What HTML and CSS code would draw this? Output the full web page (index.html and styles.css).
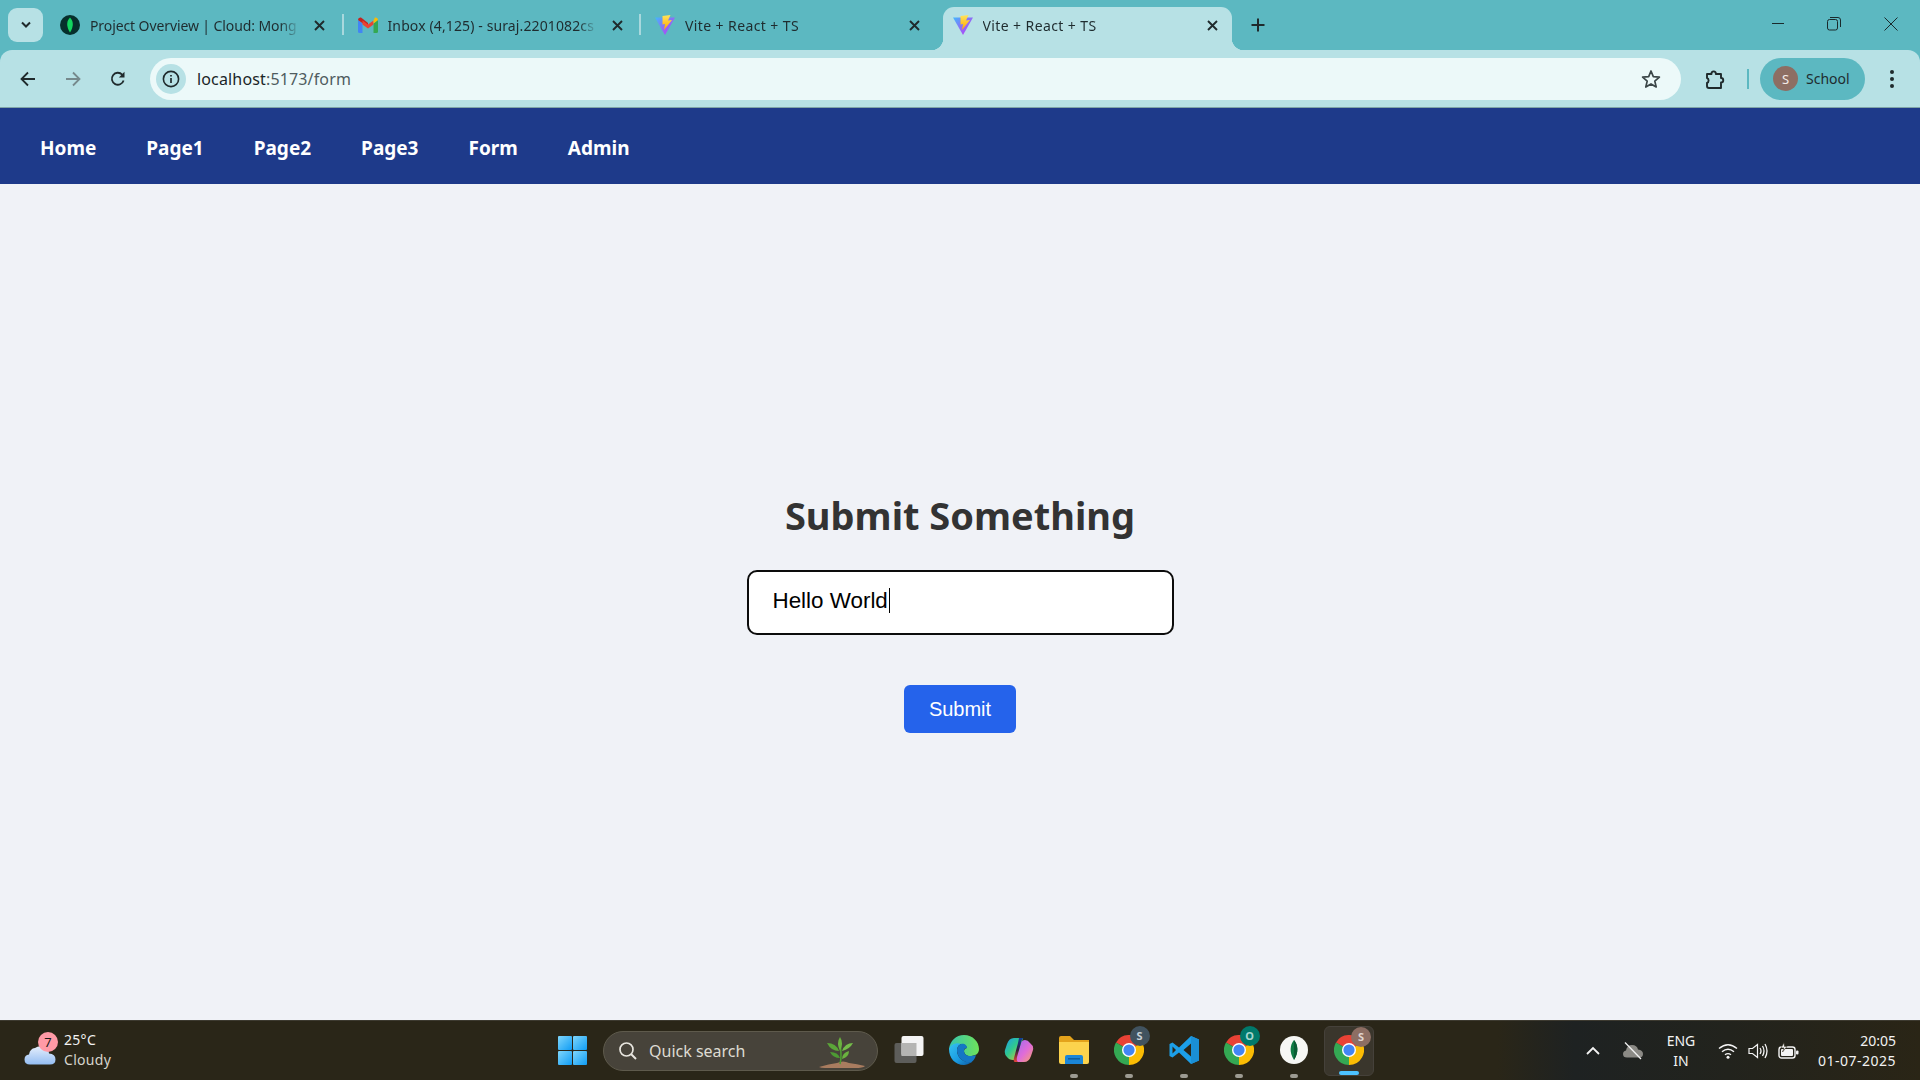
FILE: index.html
```html
<!DOCTYPE html>
<html lang="en">
<head>
<meta charset="utf-8">
<title>Vite + React + TS</title>
<link rel="stylesheet" href="styles.css">
</head>
<body>
<svg class="defs" width="0" height="0" aria-hidden="true">
  <defs>
    <linearGradient id="viteA" x1="0" y1="0" x2="1" y2="1"><stop offset="0" stop-color="#41b8ff"/><stop offset=".5" stop-color="#8f6cf5"/><stop offset="1" stop-color="#bd34fe"/></linearGradient>
    <linearGradient id="viteB" x1="0" y1="0" x2="0" y2="1"><stop offset="0" stop-color="#ffe45c"/><stop offset="1" stop-color="#ffa800"/></linearGradient>
    <linearGradient id="edgeA" x1="0" y1="0" x2="1" y2="1"><stop offset="0" stop-color="#35c1f1"/><stop offset=".55" stop-color="#1b9de2"/><stop offset="1" stop-color="#0c59a4"/></linearGradient>
    <linearGradient id="edgeB" x1="0" y1="0" x2="1" y2="0"><stop offset="0" stop-color="#36c4b0"/><stop offset="1" stop-color="#6fe35a"/></linearGradient>
    <linearGradient id="copA" x1="0" y1="0" x2="1" y2="1"><stop offset="0" stop-color="#1c9cf0"/><stop offset=".45" stop-color="#2fc98e"/><stop offset="1" stop-color="#f8c62a"/></linearGradient>
    <linearGradient id="copB" x1="0" y1="0" x2="1" y2="1"><stop offset="0" stop-color="#9a6cf0"/><stop offset=".55" stop-color="#e06cd8"/><stop offset="1" stop-color="#f8a26a"/></linearGradient>
    <linearGradient id="copC" x1="0" y1="0" x2="0" y2="1"><stop offset="0" stop-color="#123f9c"/><stop offset=".5" stop-color="#2a1f3a"/><stop offset="1" stop-color="#e8453c"/></linearGradient>
    <linearGradient id="winA" x1="0" y1="0" x2="1" y2="1"><stop offset="0" stop-color="#7fd6fb"/><stop offset="1" stop-color="#0f9cf5"/></linearGradient>
    <linearGradient id="cloudA" x1="0" y1="0" x2="0" y2="1"><stop offset="0" stop-color="#e6effc"/><stop offset="1" stop-color="#94bdf2"/></linearGradient>
    <symbol id="vite" viewBox="0 0 20 20">
      <path d="M0 2.5 L20 2.5 L10 20 Z" fill="url(#viteA)"/>
      <path d="M7.5 1 L15.5 0 L13 5.5 L17 5 L9 15 L10 9 L7.5 9.5 Z" fill="url(#viteB)"/>
    </symbol>
    <symbol id="chrome" viewBox="0 0 24 24">
      <path d="M12 12 L1.6 6 A12 12 0 0 1 22.4 6 Z" fill="#e94235"/>
      <path d="M12 12 L1.6 6 A12 12 0 0 0 12 24 Z" fill="#34a853"/>
      <path d="M12 12 L22.4 6 A12 12 0 0 1 12 24 Z" fill="#fbbc04"/>
      <circle cx="12" cy="12" r="5.6" fill="#fff"/>
      <circle cx="12" cy="12" r="4.5" fill="#4285f4"/>
    </symbol>
    <symbol id="close" viewBox="0 0 11 11">
      <path d="M1 1 L10 10 M10 1 L1 10" stroke="#1f2a2c" stroke-width="1.9"/>
    </symbol>
  </defs>
</svg>

<header class="browser">
  <div class="tabstrip">
    <button class="tab-search" aria-label="Search tabs">
      <svg width="12" height="8" viewBox="0 0 12 8"><path d="M2 1.5 L6 5.5 L10 1.5" fill="none" stroke="#1f2a2c" stroke-width="2"/></svg>
    </button>
    <div class="tab sep">
      <svg class="favicon" viewBox="0 0 20 20"><circle cx="10" cy="10" r="10" fill="#062f2c"/><path d="M10 2.5 C13.5 6 14 11 10 17.5 C6 11 6.5 6 10 2.5 Z" fill="#13d45f"/></svg>
      <span class="tab-title">Project Overview | Cloud: Mong</span>
      <svg class="tab-close"><use href="#close"/></svg>
    </div>
    <div class="tab sep">
      <svg class="favicon" viewBox="0 0 20 16"><path d="M0 3 L0 14.5 Q0 16 1.5 16 L4.5 16 L4.5 6.5 Z" fill="#4285f4"/><path d="M15.5 6.5 L15.5 16 L18.5 16 Q20 16 20 14.5 L20 3 Z" fill="#34a853"/><path d="M0 3 Q0 0 3 0.5 L10 6 L10 10 L0 3 Z" fill="#c5221f"/><path d="M4.5 3.5 L10 7.5 L15.5 3.5 L15.5 7.5 L10 11.5 L4.5 7.5 Z" fill="#ea4335"/><path d="M15.5 3.5 L17 0.5 Q20 0 20 3 L15.5 6.5 Z" fill="#fbbc04"/></svg>
      <span class="tab-title wide">Inbox (4,125) - suraj.2201082cs</span>
      <svg class="tab-close"><use href="#close"/></svg>
    </div>
    <div class="tab">
      <svg class="favicon"><use href="#vite"/></svg>
      <span class="tab-title plain">Vite + React + TS</span>
      <svg class="tab-close"><use href="#close"/></svg>
    </div>
    <div class="tab active">
      <svg class="favicon"><use href="#vite"/></svg>
      <span class="tab-title plain">Vite + React + TS</span>
      <svg class="tab-close"><use href="#close"/></svg>
    </div>
    <button class="new-tab" aria-label="New tab">
      <svg width="14" height="14" viewBox="0 0 14 14"><path d="M7 0.5 V13.5 M0.5 7 H13.5" stroke="#1f2a2c" stroke-width="2"/></svg>
    </button>
    <div class="window-controls">
      <span class="win-btn"><svg width="14" height="14" viewBox="0 0 14 14"><path d="M1 6.5 H13" stroke="#1a2a2c" stroke-width="1"/></svg></span>
      <span class="win-btn"><svg width="14" height="14" viewBox="0 0 14 14"><rect x="0.5" y="2.5" width="10" height="10.5" rx="2" fill="none" stroke="#1a2a2c"/><path d="M3 0.5 H11 Q13.5 0.5 13.5 3 V10" fill="none" stroke="#1a2a2c"/></svg></span>
      <span class="win-btn"><svg width="14" height="14" viewBox="0 0 14 14"><path d="M0.5 0.5 L13.5 13.5 M13.5 0.5 L0.5 13.5" stroke="#1a2a2c" stroke-width="1"/></svg></span>
    </div>
  </div>
  <div class="toolbar">
    <button class="tool-btn" aria-label="Back"><svg width="16" height="16" viewBox="0 0 16 16"><path d="M15 8 H2 M8 1.5 L1.5 8 L8 14.5" fill="none" stroke="#1f2a2c" stroke-width="1.8"/></svg></button>
    <button class="tool-btn" aria-label="Forward"><svg width="16" height="16" viewBox="0 0 16 16"><path d="M1 8 H14 M8 1.5 L14.5 8 L8 14.5" fill="none" stroke="#76898c" stroke-width="1.8"/></svg></button>
    <button class="tool-btn" aria-label="Reload"><svg width="16" height="16" viewBox="0 0 16 16"><path d="M13.6 9.5 A6 6 0 1 1 12.2 3.6" fill="none" stroke="#1f2a2c" stroke-width="1.8"/><path d="M14.5 0.8 V6.5 H8.8 Z" fill="#1f2a2c"/></svg></button>
    <div class="omnibox">
      <span class="site-info"><svg width="18" height="18" viewBox="0 0 18 18"><circle cx="9" cy="9" r="7.6" fill="none" stroke="#1f2a2c" stroke-width="1.6"/><path d="M9 8 V13 M9 5 V6.6" stroke="#1f2a2c" stroke-width="1.7"/></svg></span>
      <span class="url"><span class="url-host">localhost</span>:5173/form</span>
      <svg class="star" width="20" height="20" viewBox="0 0 20 20"><path d="M10 2 L12.3 7.6 L18.4 8.1 L13.8 12.1 L15.2 18 L10 14.9 L4.8 18 L6.2 12.1 L1.6 8.1 L7.7 7.6 Z" fill="none" stroke="#3b4648" stroke-width="1.7" stroke-linejoin="round"/></svg>
    </div>
    <button class="tool-btn ext" aria-label="Extensions"><svg width="22" height="22" viewBox="0 0 22 22"><path d="M3 6 H7.5 A2.2 2.2 0 1 1 11.8 6 H17 V10 A2.2 2.2 0 1 1 17 14.5 V20 H5 Q3 20 3 18 V14.8 A2.6 2.6 0 0 0 3 10 Z" fill="none" stroke="#1f2a2c" stroke-width="1.9" stroke-linejoin="round"/></svg></button>
    <span class="tool-sep"></span>
    <div class="profile"><span class="avatar">S</span><span class="profile-name">School</span></div>
    <button class="tool-btn menu" aria-label="Menu"><svg width="6" height="20" viewBox="0 0 6 20"><circle cx="3" cy="3" r="2" fill="#1f2a2c"/><circle cx="3" cy="10" r="2" fill="#1f2a2c"/><circle cx="3" cy="17" r="2" fill="#1f2a2c"/></svg></button>
  </div>
</header>

<nav class="navbar">
  <a class="nav-link">Home</a>
  <a class="nav-link">Page1</a>
  <a class="nav-link">Page2</a>
  <a class="nav-link">Page3</a>
  <a class="nav-link">Form</a>
  <a class="nav-link">Admin</a>
</nav>

<main class="page">
  <h1 class="title">Submit Something</h1>
  <div class="field"><span class="field-text">Hello World</span><span class="caret"></span></div>
  <button class="submit">Submit</button>
</main>

<footer class="taskbar">
  <div class="weather">
    <div class="weather-icon">
      <svg width="32" height="21" viewBox="0 0 32 21"><path d="M6 20.5 Q0.5 20.5 0.5 15.5 Q0.5 11 5 10.5 Q6 4.5 11 4 Q15 1 20 3 Q25 5 25 9.5 Q31.5 10 31.5 15.5 Q31.5 20.5 26 20.5 Z" fill="url(#cloudA)"/></svg>
      <span class="weather-badge">7</span>
    </div>
    <div class="weather-text"><span class="temp">25°C</span><span class="cond">Cloudy</span></div>
  </div>
  <svg class="start" width="29" height="29" viewBox="0 0 29 29"><rect width="14" height="14" rx="1" fill="url(#winA)"/><rect x="15" width="14" height="14" rx="1" fill="url(#winA)"/><rect y="15" width="14" height="14" rx="1" fill="url(#winA)"/><rect x="15" y="15" width="14" height="14" rx="1" fill="url(#winA)"/></svg>
  <div class="search">
    <svg width="20" height="20" viewBox="0 0 20 20"><circle cx="8.5" cy="8.5" r="6.5" fill="none" stroke="#e8e6df" stroke-width="1.7"/><path d="M13 13 L18 18" stroke="#e8e6df" stroke-width="1.9"/></svg>
    <span class="search-text">Quick search</span>
    <svg class="plant" width="46" height="32" viewBox="0 0 46 32"><path d="M0 30 Q10 27 18 26 Q24 23 30 26 Q38 27 46 29 Q44 31 36 31 H6 Q2 31 0 30 Z" fill="#a97c5f"/><path d="M21 27 Q23 20 21 6" fill="none" stroke="#4d9a33" stroke-width="1.6"/><path d="M21 0 Q25 6 21 14 Q17 6 21 0 Z" fill="#6ab23f"/><path d="M20 14 Q12 14 8 6 Q17 6 20 14 Z" fill="#5ba638"/><path d="M23 14 Q31 12 34 6 Q26 6 23 14 Z" fill="#74bd4a"/><path d="M21 21 Q14 21 11 15 Q19 15 21 21 Z" fill="#4d9a33"/><path d="M23 22 Q30 20 30 14 Q23 16 23 22 Z" fill="#6ab23f"/></svg>
  </div>
  <div class="apps">
    <div class="app">
      <svg width="30" height="30" viewBox="0 0 30 30"><rect x="0.5" y="8" width="22" height="20" rx="2" fill="#5d5d5a"/><rect x="7.5" y="1" width="22" height="20" rx="2" fill="#f4f4f4"/><rect x="7.5" y="8" width="15" height="13" fill="#b5b5b3"/></svg>
    </div>
    <div class="app">
      <svg width="30" height="30" viewBox="0 0 30 30"><path d="M15 0 C24 0 30 7 30 14 C30 19 26 21 21 21 C18 21 15 19 15 16 C15 14 17 13 18 13 C17 9 13 8 9 10 C4 12 1 15 0 14 C1 6 7 0 15 0 Z" fill="url(#edgeB)"/><path d="M0 14 C2 9 8 7 12 9 C8 11 7 15 9 20 C11 25 17 28 23 27 C20 29 17 30 15 30 C6 30 0 23 0 14 Z" fill="url(#edgeA)"/><path d="M12 9 C16 8 18 11 18 13 C16 13 15 14 15 16 C15 19 18 21 21 21 C24 21 27 20 27 20 C26 24 24 26 22 27.5 C17 28 11 25 9 20 C7 15 8 11 12 9 Z" fill="#1477c4"/></svg>
    </div>
    <div class="app">
      <svg width="30" height="30" viewBox="0 0 30 30"><path d="M10 3 H19 L13 25 H9 Q5 25 3 22 Q0 19 1 15 L3 9 Q5 3 10 3 Z" fill="url(#copA)"/><path d="M21 5 Q24 5 26 8 Q30 11 29 15 L27 21 Q25 27 20 27 H11 L17 8 Q18 5 21 5 Z" fill="url(#copB)"/><path d="M15 3 H20 Q18 3 17 8 L13 22 Q12 27 15 27 H11 Q9 27 10 23 L14 8 Q15 3 15 3 Z" fill="url(#copC)"/></svg>
    </div>
    <div class="app">
      <svg width="30" height="28" viewBox="0 0 30 28"><path d="M0 2 Q0 0 2 0 H11 L15 4 H30 V10 H0 Z" fill="#e4a31b"/><path d="M0 6 H30 V26 Q30 28 28 28 H2 Q0 28 0 26 Z" fill="#fcd34d"/><path d="M6 21 Q6 19 8 19 H22 Q24 19 24 21 V28 H6 Z" fill="#1b86d8"/><rect x="9" y="22" width="12" height="1.6" fill="#0f5f9f"/></svg>
      <span class="dot"></span>
    </div>
    <div class="app">
      <svg width="30" height="30"><use href="#chrome"/></svg>
      <span class="app-badge badge-slate">S</span>
      <span class="dot"></span>
    </div>
    <div class="app">
      <svg width="30" height="30" viewBox="0 0 30 30"><path d="M22 1 L30 4.5 V25.5 L22 29 L10 17.5 L3.5 22.5 L0.5 21 V9 L3.5 7.5 L10 12.5 Z M22 8.5 L14.5 15 L22 21.5 Z M3.5 11.5 V18.5 L7 15 Z" fill="#1c9fe8" fill-rule="evenodd"/><path d="M22 1 L30 4.5 V25.5 L22 29 Z M22 8.5 V21.5 L22 21.5 Z" fill="#1a8fd6"/></svg>
      <span class="dot"></span>
    </div>
    <div class="app">
      <svg width="30" height="30"><use href="#chrome"/></svg>
      <span class="app-badge badge-teal">O</span>
      <span class="dot"></span>
    </div>
    <div class="app">
      <svg width="28" height="28" viewBox="0 0 28 28"><circle cx="14" cy="14" r="14" fill="#f6f7f4"/><path d="M14 4 C18 9 19 16 14 24 C9 16 10 9 14 4 Z" fill="#0e7a43"/><path d="M14 4 C18 9 19 16 14 24 Z" fill="#0a5c33"/></svg>
      <span class="dot"></span>
    </div>
    <div class="app current">
      <svg width="30" height="30"><use href="#chrome"/></svg>
      <span class="app-badge badge-brown">S</span>
      <span class="dot active-dot"></span>
    </div>
  </div>
  <div class="tray">
    <span class="tray-item w40"><svg width="14" height="9" viewBox="0 0 14 9"><path d="M1 8 L7 2 L13 8" fill="none" stroke="#f4f4f4" stroke-width="1.8"/></svg></span>
    <span class="tray-item w40"><svg width="22" height="18" viewBox="0 0 22 18"><path d="M5 15.5 Q1 15.5 1 12 Q1 9 4 8.5 Q5 3 10 3 Q15 3 16 7.5 Q21 8 21 12 Q21 15.5 17 15.5 Z" fill="#8b8a85"/><path d="M3 0.5 L19 17" stroke="#f2f2f2" stroke-width="1.3"/></svg></span>
    <div class="lang"><span>ENG</span><span>IN</span></div>
    <span class="tray-item w30"><svg width="20" height="16" viewBox="0 0 20 16"><path d="M1 5.5 Q10 -2 19 5.5 M4 8.8 Q10 3.5 16 8.8 M7 11.8 Q10 9.5 13 11.8" fill="none" stroke="#f4f4f4" stroke-width="1.4"/><circle cx="10" cy="14.2" r="1.5" fill="#f4f4f4"/></svg></span>
    <span class="tray-item w30"><svg width="20" height="18" viewBox="0 0 20 18"><path d="M1 6.5 H4.5 L9.5 2.5 V15.5 L4.5 11.5 H1 Z" fill="none" stroke="#f4f4f4" stroke-width="1.2"/><path d="M12 6 Q14 9 12 12 M14.5 4 Q17.5 9 14.5 14 M17 2 Q21 9 17 16" fill="none" stroke="#f4f4f4" stroke-width="1.3"/></svg></span>
    <span class="tray-item w30"><svg width="21" height="18" viewBox="0 0 21 18"><rect x="1" y="5" width="16" height="11" rx="2.5" fill="none" stroke="#f4f4f4" stroke-width="1.4"/><rect x="3" y="7" width="12" height="7" rx="1" fill="#f4f4f4"/><rect x="18" y="8.5" width="2.5" height="4" rx="1" fill="#f4f4f4"/><path d="M6 0.5 L3 6 H6 L4.5 10 L9 4.5 H6.5 Z" fill="#f4f4f4" stroke="#2a2516" stroke-width=".6"/></svg></span>
    <div class="clock"><span>20:05</span><span class="date">01-07-2025</span></div>
  </div>
</footer>
</body>
</html>
```

FILE: styles.css
```css
* { box-sizing: border-box; }
html, body { margin: 0; height: 100%; }
body {
  width: 1920px;
  height: 1080px;
  overflow: hidden;
  display: flex;
  flex-direction: column;
  font-family: "Noto Sans", "Open Sans", sans-serif;
  background: #f0f2f7;
}
button { border: 0; background: none; padding: 0; font: inherit; }
.defs { position: absolute; }

/* Browser chrome */
.browser { flex: none; height: 108px; background: #5cb8c1; }
.tabstrip { display: flex; align-items: flex-end; height: 50px; padding-left: 8px; }
.tab-search {
  align-self: flex-start;
  margin-top: 8px;
  margin-right: 3px;
  width: 35px;
  height: 34px;
  border-radius: 9px;
  background: #b7e1e5;
  display: flex;
  align-items: center;
  justify-content: center;
}
.tab {
  position: relative;
  width: 297.5px;
  height: 43px;
  display: flex;
  align-items: center;
  padding: 0 16px 7px 14px;
  color: #1f2c2f;
  font-size: 14px;
}
.tab.sep::after {
  content: "";
  position: absolute;
  right: 0;
  top: 7px;
  width: 2px;
  height: 21px;
  background: #a9d8dd;
}
.tab.active {
  margin-left: 4px;
  margin-right: 4px;
  width: 289.5px;
  padding-left: 10px;
  padding-right: 12px;
  background: #b7e1e5;
  border-radius: 11px 11px 0 0;
}
.tab.active::before,
.tab.active::after {
  content: "";
  position: absolute;
  bottom: 0;
  width: 12px;
  height: 12px;
}
.tab.active::before { left: -12px; background: radial-gradient(circle at 0 0, transparent 12px, #b7e1e5 12.5px); }
.tab.active::after { right: -12px; background: radial-gradient(circle at 100% 0, transparent 12px, #b7e1e5 12.5px); }
.favicon { flex: none; width: 20px; height: 20px; margin-right: 10px; }
.tab-title {
  flex: 1;
  min-width: 0;
  white-space: nowrap;
  overflow: hidden;
  letter-spacing: -0.1px;
  -webkit-mask-image: linear-gradient(to right, #000 190px, transparent 210px);
  mask-image: linear-gradient(to right, #000 190px, transparent 210px);
}
.tab-title.wide { letter-spacing: 0.12px; }
.tab-title.plain { letter-spacing: 0.4px; }
.tab-close { flex: none; width: 11px; height: 11px; margin: 0 2.5px; }
.new-tab { align-self: flex-start; margin-top: 15px; margin-left: 11px; width: 22px; height: 20px; display: flex; align-items: center; justify-content: center; }
.window-controls { margin-left: auto; align-self: flex-start; display: flex; margin-right: 1px; }
.win-btn { width: 56.5px; height: 48px; display: flex; align-items: center; justify-content: center; }

.toolbar {
  height: 58px;
  background: #b7e1e5;
  border-bottom: 1px solid #80a5a8;
  border-radius: 12px 12px 0 0;
  display: flex;
  align-items: center;
  padding: 0 1px 0 5px;
}
.tool-btn { flex: none; width: 45px; height: 40px; display: flex; align-items: center; justify-content: center; }
.omnibox {
  flex: 1;
  height: 42px;
  margin-left: 10px;
  border-radius: 21px;
  background: #ecf9f9;
  display: flex;
  align-items: center;
  padding: 0 20px 0 6px;
}
.site-info { width: 30px; height: 30px; border-radius: 50%; background: #b7e1e5; display: flex; align-items: center; justify-content: center; }
.url { margin-left: 11px; font-size: 16px; color: #4f5c5f; letter-spacing: 0.15px; }
.url-host { color: #1a2527; }
.star { margin-left: auto; }
.tool-btn.ext { width: 40px; margin-left: 14px; }
.tool-sep { flex: none; width: 2px; height: 20px; margin-left: 12px; background: #5cb8c1; }
.profile {
  flex: none;
  width: 105px;
  height: 42px;
  margin-left: 11px;
  border-radius: 21px;
  background: #5cb8c1;
  display: flex;
  align-items: center;
  padding-left: 13px;
  gap: 8px;
  font-size: 14px;
  color: #1f2c2f;
}
.avatar {
  width: 25px;
  height: 25px;
  border-radius: 50%;
  background: #8d6e63;
  color: #f4ece8;
  font-size: 13px;
  display: flex;
  align-items: center;
  justify-content: center;
}
.tool-btn.menu { width: 54px; }

/* App nav */
.navbar {
  flex: none;
  height: 76px;
  background: #1e3a8a;
  display: flex;
  align-items: center;
  gap: 50px;
  padding: 3px 0 0 40px;
}
.nav-link { color: #fff; font-size: 19px; font-weight: 700; }

/* Form page */
.page {
  flex: 1;
  display: flex;
  flex-direction: column;
  align-items: center;
  padding-top: 304px;
  background: #f0f2f7;
}
.title { margin: 0 0 28px; font-size: 38px; line-height: 54px; font-weight: 700; color: #333; }
.field {
  width: 427px;
  height: 65px;
  border: 2px solid #0c0c0c;
  border-radius: 10px;
  background: #fff;
  display: flex;
  align-items: center;
  padding: 0 0 4px 24px;
  font-family: "Liberation Sans", Arial, sans-serif;
  font-size: 22.4px;
  color: #000;
}
.caret { width: 1px; height: 25px; background: #000; margin-left: 1px; }
.submit {
  margin-top: 50px;
  width: 112px;
  height: 48px;
  border-radius: 6px;
  background: #2563eb;
  color: #fff;
  font-family: "Liberation Sans", Arial, sans-serif;
  font-size: 20px;
}

/* Taskbar */
.taskbar {
  flex: none;
  height: 60px;
  display: flex;
  align-items: center;
  border-top: 1px solid #3d3a30;
  background: linear-gradient(to right, #2a2618 0, #2a2618 78%, #1e2222 82%, #22231d 90%, #2a2516 100%);
  color: #f2f2f2;
  font-family: "Noto Sans", "Open Sans", sans-serif;
}
.weather { flex: none; width: 558px; display: flex; align-items: center; padding-left: 24px; gap: 8px; }
.weather-icon { position: relative; width: 32px; height: 21px; margin-top: 8px; }
.weather-badge {
  position: absolute;
  left: 14px;
  top: -12px;
  width: 20px;
  height: 20px;
  border-radius: 50%;
  background: #ff9aa6;
  color: #1a1a1a;
  font-size: 13px;
  line-height: 20px;
  text-align: center;
}
.weather-text { display: flex; flex-direction: column; font-size: 14px; line-height: 20px; margin-top: -2px; letter-spacing: 0.3px; }
.cond { color: #d6d4cc; }
.start { flex: none; }
.search {
  flex: none;
  width: 275px;
  height: 40px;
  margin-left: 16px;
  border-radius: 20px;
  border: 1px solid #5e5a4c;
  background: #47433a;
  display: flex;
  align-items: center;
  padding-left: 14px;
  gap: 11px;
  font-size: 16px;
  color: #dedbd2;
}
.plant { margin-left: auto; margin-right: 12px; margin-top: 4px; }
.apps { display: flex; margin-left: 3.5px; }
.app { position: relative; width: 55px; height: 50px; display: flex; align-items: center; justify-content: center; padding-bottom: 2px; }
.app.current { background: #3a362c; border-radius: 6px; width: 50px; margin-left: 2.5px; border: 1px solid #45413a; }
.dot { position: absolute; left: 50%; bottom: -2px; width: 8px; height: 4px; margin-left: -4px; border-radius: 2px; background: #9d9b92; }
.dot.active-dot { width: 20px; margin-left: -10px; background: #4cc2ff; bottom: 0; }
.app-badge {
  position: absolute;
  left: 28px;
  top: 0;
  width: 20px;
  height: 20px;
  border-radius: 50%;
  font-size: 11px;
  font-weight: 700;
  line-height: 20px;
  text-align: center;
}
.app.current .app-badge { left: 26px; }
.badge-slate { background: #41535f; color: #c8d2d8; }
.badge-teal { background: #00796b; color: #a5d6cf; }
.badge-brown { background: #8d6e63; color: #e0d4cf; }
.tray { margin-left: auto; display: flex; align-items: center; padding-right: 24px; }
.tray-item { flex: none; display: flex; align-items: center; justify-content: center; }
.w40 { width: 40px; }
.w30 { width: 30px; }
.lang { width: 56px; margin-right: 4px; display: flex; flex-direction: column; align-items: center; font-size: 14px; line-height: 20px; }
.clock { width: 93px; display: flex; flex-direction: column; align-items: flex-end; font-size: 14px; line-height: 20px; }
.date { letter-spacing: 0.5px; }
```
